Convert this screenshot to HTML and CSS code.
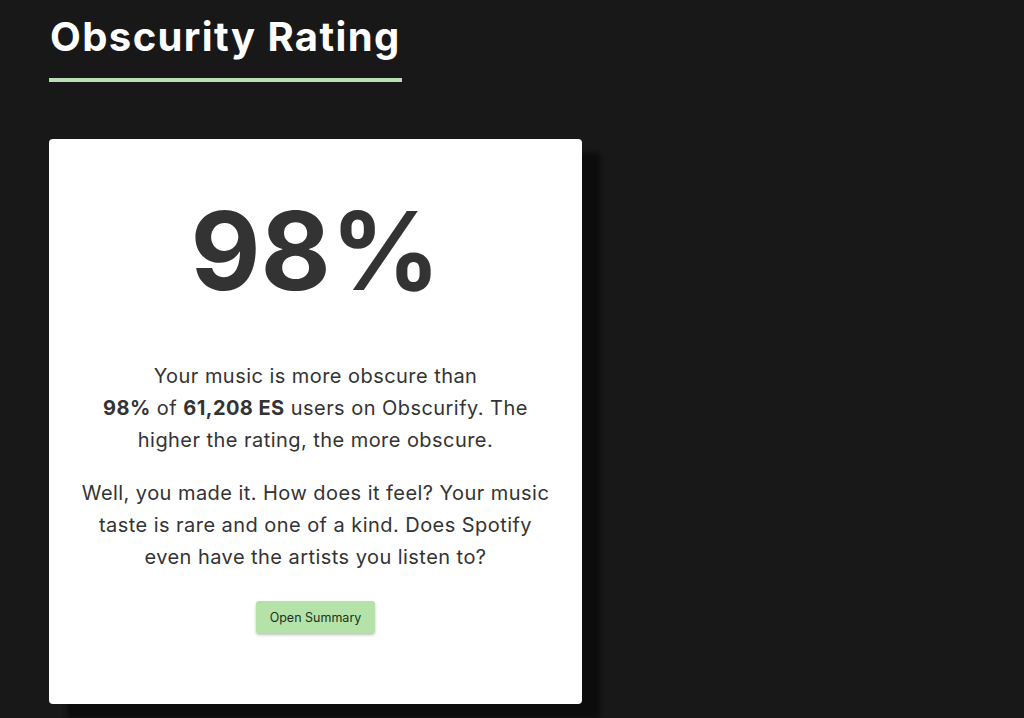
FILE: index.html
```html
<!DOCTYPE html>
<html lang="en">
<head>
<meta charset="utf-8">
<title>Obscurity Rating</title>
<link rel="stylesheet" href="styles.css">
</head>
<body>
<main class="page">
  <h1 class="title">Obscurity Rating</h1>
  <section class="card">
    <div class="rating">98%</div>
    <p class="text">Your music is more obscure than<br><strong>98%</strong> of <strong>61,208 ES</strong> users on Obscurify. The higher the rating, the more obscure.</p>
    <p class="text">Well, you made it. How does it feel? Your music taste is rare and one of a kind. Does Spotify even have the artists you listen to?</p>
    <button class="btn" type="button">Open Summary</button>
  </section>
</main>
</body>
</html>
```

FILE: styles.css
```css
* { box-sizing: border-box; }
html, body { margin: 0; padding: 0; }
body {
  background: #181818;
  font-family: Inter, "Noto Sans", sans-serif;
  height: 718px;
  overflow: hidden;
}
.page {
  padding: 9px 0 0 49px;
}
.title {
  display: inline-block;
  margin: 0;
  color: #ffffff;
  font-size: 40px;
  font-weight: 700;
  letter-spacing: 1.4px;
  line-height: 56px;
  padding: 0 1px 13px 1px;
  border-bottom: 4px solid #b9dfb3;
}
.card {
  margin-top: 57px;
  width: 533px;
  height: 565px;
  background: #ffffff;
  border-radius: 4px;
  box-shadow: 18px 14px 4px #0c0c0c;
  display: flex;
  flex-direction: column;
  align-items: center;
  padding: 42px 30px 0;
  text-align: center;
  color: #333333;
}
.rating {
  font-size: 108px;
  font-weight: 700;
  line-height: 140px;
  color: #333333;
  margin-bottom: 39px;
}
.text {
  margin: 0 0 21px;
  font-size: 20px;
  letter-spacing: 0.45px;
  line-height: 32px;
  color: #333333;
}
.text strong { font-weight: 700; }
.btn {
  margin-top: 7px;
  background: #b4e2a8;
  border: none;
  border-radius: 3px;
  padding: 0 14px;
  height: 32px;
  font-family: inherit;
  font-size: 12.5px;
  color: #1c321a;
  box-shadow: 0 2px 3px rgba(0,0,0,0.25);
}
```
